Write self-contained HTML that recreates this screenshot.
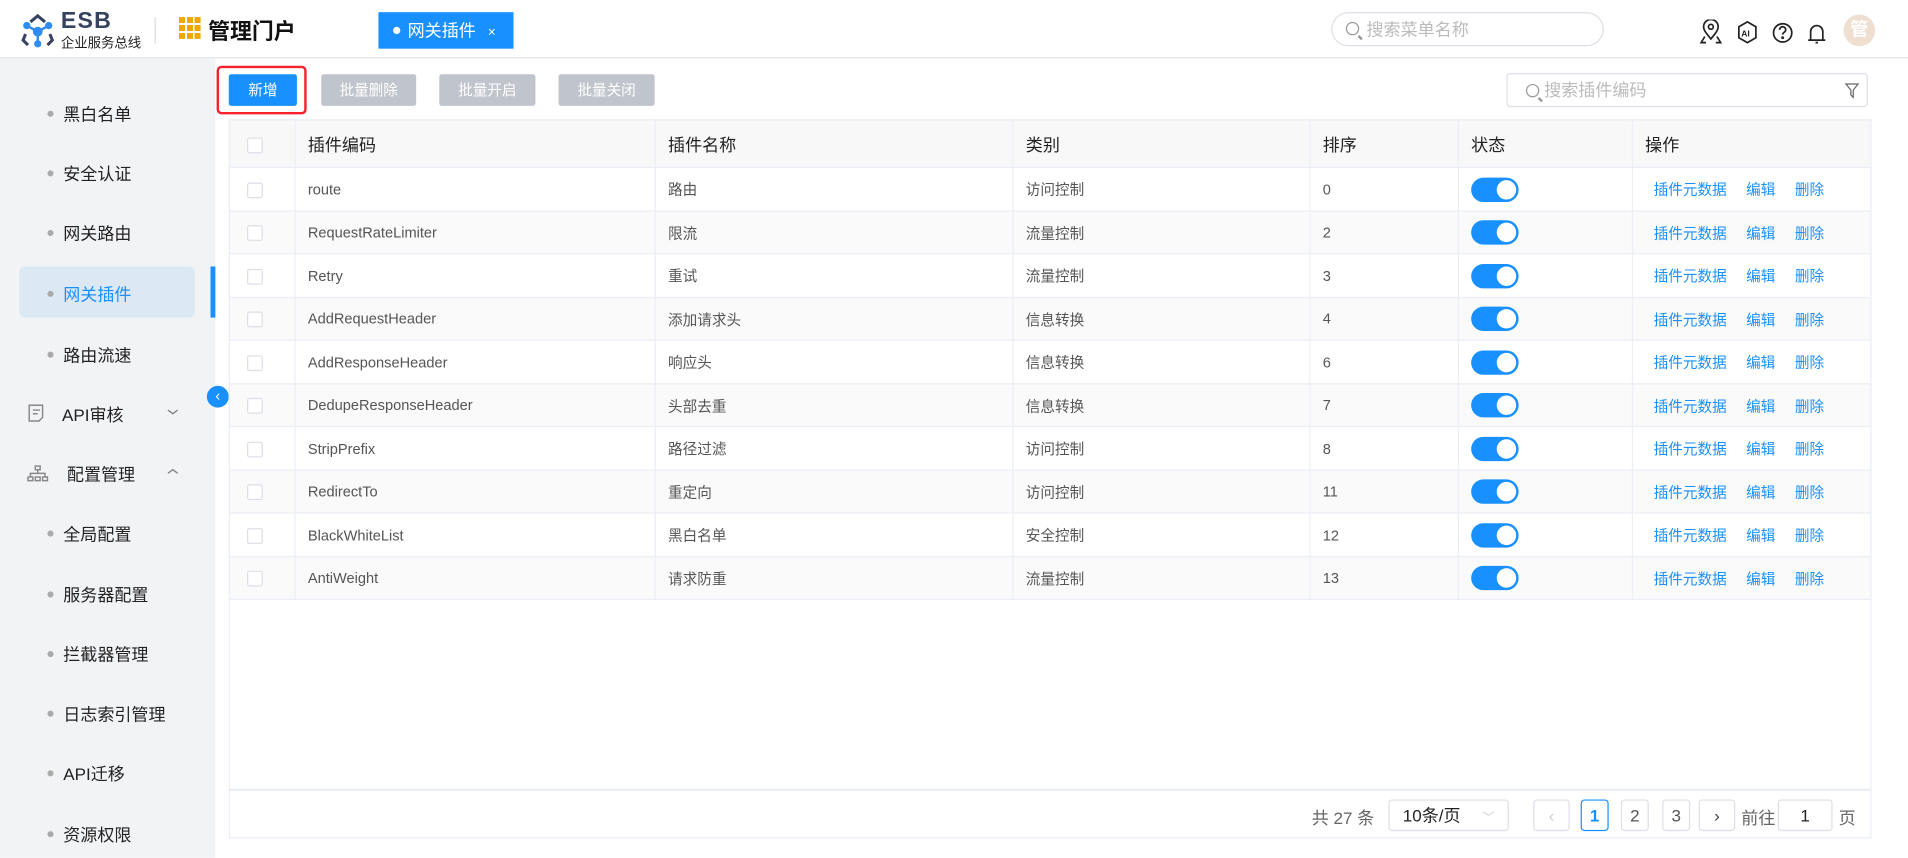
<!DOCTYPE html>
<html><head><meta charset="utf-8"><style>
*{box-sizing:border-box;margin:0;padding:0}
html,body{width:1908px;height:858px;overflow:hidden;background:#fff}
#w{width:1568px;height:705px;transform:scale(1.21684);transform-origin:0 0;position:relative;font-family:"Liberation Sans","Noto Sans CJK SC",sans-serif;color:#333;font-size:13px}
.a{position:absolute}
.hdr{left:0;top:0;width:1568px;height:48px;border-bottom:1px solid #e4e4e4;background:#fff}
.side{left:0;top:48px;width:177px;height:657px;background:#f2f3f5}
.si{position:absolute;left:52px;font-size:14px;color:#222}
.si:before{content:"";position:absolute;left:-13px;top:7px;width:5px;height:5px;border-radius:50%;background:#aaa}
.btn{position:absolute;top:61px;height:26px;color:#fff;font-size:12px;text-align:center;line-height:26px;border-radius:2px}
table{border-collapse:collapse;position:absolute;left:188px;top:98px;width:1350px;table-layout:fixed}
td,th{border:1px solid #ebeef5;height:35.5px;font-size:12px;color:#555;padding-left:10px;text-align:left;font-weight:normal;padding-top:1px}
th{height:39px;font-size:14px;color:#222;background:#f8f8f9}
tr:nth-child(odd) td{background:#fafafa}
.cb{display:inline-block;width:13px;height:13px;border:1px solid #dcdfe6;border-radius:2px;background:#fff;vertical-align:middle;margin-left:4px}
.sw{display:inline-block;width:39px;height:20px;border-radius:10px;background:#1890ff;position:relative;vertical-align:middle}
.sw:after{content:"";position:absolute;right:2px;top:2px;width:16px;height:16px;border-radius:50%;background:#fff}
.op{color:#1890ff;font-size:12px;margin-left:7px;margin-right:9px}
.pg{position:absolute;top:657px;height:26px;border:1px solid #dcdfe6;border-radius:3px;text-align:center;line-height:24px;font-size:14px;color:#555}
.mg{position:absolute;width:11px;height:11px;border:1.5px solid #999;border-radius:50%}
.mg:after{content:"";position:absolute;right:-4px;bottom:-3px;width:4px;height:1.5px;background:#999;transform:rotate(45deg)}
</style></head><body><div id="w">
<div class="a hdr"></div>
<svg class="a" style="left:16px;top:10px" width="30" height="30" viewBox="0 0 30 30"><g fill="none" stroke="#364260" stroke-width="2.5"><path d="M9 8l6-5 6 5"/><path d="M5 18l-2 5 4 4"/><path d="M25 18l2 5-4 4"/></g><g stroke="#2f8cf0" stroke-width="2" fill="#2f8cf0"><line x1="15" y1="16" x2="6" y2="11"/><line x1="15" y1="16" x2="24" y2="11"/><line x1="15" y1="16" x2="15" y2="26"/><circle cx="15" cy="16" r="3"/><circle cx="6" cy="11" r="2"/><circle cx="24" cy="11" r="2"/><circle cx="15" cy="26" r="2"/></g></svg>
<div class="a" style="left:50px;top:8px;font-size:19px;font-weight:bold;color:#364260;letter-spacing:1px;line-height:19px">ESB</div>
<div class="a" style="left:50px;top:27px;font-size:11px;color:#222">企业服务总线</div>
<div class="a" style="left:127px;top:14px;width:1px;height:22px;background:#ddd"></div>
<div class="a" style="left:147px;top:14px;width:18px;height:18px;background:repeating-linear-gradient(90deg,#f0a800 0 5px,transparent 5px 6.5px),#fff;-webkit-mask:repeating-linear-gradient(0deg,#000 0 5px,transparent 5px 6.5px)"></div>
<div class="a" style="left:171px;top:12px;font-size:18px;font-weight:bold;color:#111">管理门户</div>
<div class="a" style="left:311px;top:10px;width:111px;height:30px;background:#1890ff;color:#fff;font-size:14px;line-height:30px;padding-left:24px">网关插件 <span style="font-size:11px;margin-left:6px">×</span><span style="position:absolute;left:12px;top:12px;width:6px;height:6px;border-radius:50%;background:#fff"></span></div>
<div class="a" style="left:1094px;top:10px;width:224px;height:28px;border:1px solid #dcdfe6;border-radius:14px;color:#bbb;font-size:14px;line-height:26px;padding-left:28px">搜索菜单名称<span class="mg" style="left:11px;top:7px"></span></div>
<svg class="a" style="left:1396px;top:16px" width="110" height="22" viewBox="0 0 110 22" fill="none" stroke="#222" stroke-width="1.4"><path d="M10 16c-4-5-6-7-6-10a6 6 0 0112 0c0 3-2 5-6 10z"/><circle cx="10" cy="6" r="2"/><path d="M5 14l-3 5h4M15 14l3 5h-4"/><path d="M40 2l7 4v9l-7 4-7-4V6z"/><text x="35" y="14" font-size="7" fill="#222" stroke="none" font-family="Liberation Sans" font-weight="bold">AI</text><circle cx="69" cy="11" r="7.5"/><path d="M66.5 8.5a2.5 2.5 0 015 0c0 2-2.5 2-2.5 4"/><circle cx="69" cy="15" r=".5" fill="#222"/><path d="M92 17V10a5 5 0 0110 0v7zM90 17h14M96 19h2"/></svg>
<div class="a" style="left:1515px;top:12px;width:26px;height:26px;border-radius:50%;background:#efdfd0;color:#fff;font-size:15px;text-align:center;line-height:26px;font-weight:bold">管</div>
<div class="a side"></div>
<div class="a" style="left:16px;top:219px;width:144px;height:42px;background:#dde8f5;border-radius:4px"></div>
<div class="a" style="left:173px;top:219px;width:4px;height:42px;background:#1890ff"></div>
<div class="si" style="top:84px">黑白名单</div>
<div class="si" style="top:133px">安全认证</div>
<div class="si" style="top:182px">网关路由</div>
<div class="si" style="top:232px;color:#1890ff">网关插件</div>
<div class="si" style="top:282px">路由流速</div>
<div class="a" style="left:51px;top:331px;font-size:14px;color:#222">API审核</div>
<div class="a" style="left:55px;top:380px;font-size:14px;color:#222">配置管理</div>
<svg class="a" style="left:20px;top:330px" width="140" height="70" fill="none" stroke="#888" stroke-width="1.2"><path d="M4 3h11v10l-3 3H4z M7 7h6M7 10h4"/><path d="M118 7l4 3 4-3"/><path d="M118 59l4-3 4 3"/><rect x="9" y="53" width="4" height="3"/><rect x="3" y="62" width="4" height="3"/><rect x="9" y="62" width="4" height="3"/><rect x="15" y="62" width="4" height="3"/><path d="M11 56v3M5 62v-3h12v3"/></svg>
<div class="si" style="top:429px">全局配置</div>
<div class="si" style="top:479px">服务器配置</div>
<div class="si" style="top:528px">拦截器管理</div>
<div class="si" style="top:577px">日志索引管理</div>
<div class="si" style="top:626px">API迁移</div>
<div class="si" style="top:676px">资源权限</div>
<div class="a" style="left:170px;top:317px;width:18px;height:18px;border-radius:50%;background:#1890ff;color:#fff;font-size:12px;text-align:center;line-height:17px">‹</div>
<div class="a" style="left:178px;top:54px;width:74px;height:40px;border:2.5px solid #f5222d;border-radius:4px"></div>
<div class="btn" style="left:188px;width:56px;background:#1890ff">新增</div>
<div class="btn" style="left:264px;width:78px;background:#c0c4cc">批量删除</div>
<div class="btn" style="left:361px;width:79px;background:#c0c4cc">批量开启</div>
<div class="btn" style="left:459px;width:79px;background:#c0c4cc">批量关闭</div>
<div class="a" style="left:1238px;top:60px;width:297px;height:28px;border:1px solid #dcdfe6;border-radius:3px;color:#bbb;font-size:14px;line-height:26px;padding-left:30px">搜索插件编码<span class="mg" style="left:15px;top:8px"></span><svg style="position:absolute;right:6px;top:7px" width="12" height="13" fill="none" stroke="#666"><path d="M1 1h10L7 6v6L5 10V6z"/></svg></div>
<table>
<colgroup><col style="width:54px"><col style="width:296px"><col style="width:294px"><col style="width:244px"><col style="width:122px"><col style="width:143px"><col></colgroup>
<tr><th><span class="cb"></span></th><th>插件编码</th><th>插件名称</th><th>类别</th><th>排序</th><th>状态</th><th>操作</th></tr>
<tr><td><span class="cb"></span></td><td>route</td><td>路由</td><td>访问控制</td><td>0</td><td><span class="sw"></span></td><td><span class="op">插件元数据</span><span class="op">编辑</span><span class="op">删除</span></td></tr>
<tr><td><span class="cb"></span></td><td>RequestRateLimiter</td><td>限流</td><td>流量控制</td><td>2</td><td><span class="sw"></span></td><td><span class="op">插件元数据</span><span class="op">编辑</span><span class="op">删除</span></td></tr>
<tr><td><span class="cb"></span></td><td>Retry</td><td>重试</td><td>流量控制</td><td>3</td><td><span class="sw"></span></td><td><span class="op">插件元数据</span><span class="op">编辑</span><span class="op">删除</span></td></tr>
<tr><td><span class="cb"></span></td><td>AddRequestHeader</td><td>添加请求头</td><td>信息转换</td><td>4</td><td><span class="sw"></span></td><td><span class="op">插件元数据</span><span class="op">编辑</span><span class="op">删除</span></td></tr>
<tr><td><span class="cb"></span></td><td>AddResponseHeader</td><td>响应头</td><td>信息转换</td><td>6</td><td><span class="sw"></span></td><td><span class="op">插件元数据</span><span class="op">编辑</span><span class="op">删除</span></td></tr>
<tr><td><span class="cb"></span></td><td>DedupeResponseHeader</td><td>头部去重</td><td>信息转换</td><td>7</td><td><span class="sw"></span></td><td><span class="op">插件元数据</span><span class="op">编辑</span><span class="op">删除</span></td></tr>
<tr><td><span class="cb"></span></td><td>StripPrefix</td><td>路径过滤</td><td>访问控制</td><td>8</td><td><span class="sw"></span></td><td><span class="op">插件元数据</span><span class="op">编辑</span><span class="op">删除</span></td></tr>
<tr><td><span class="cb"></span></td><td>RedirectTo</td><td>重定向</td><td>访问控制</td><td>11</td><td><span class="sw"></span></td><td><span class="op">插件元数据</span><span class="op">编辑</span><span class="op">删除</span></td></tr>
<tr><td><span class="cb"></span></td><td>BlackWhiteList</td><td>黑白名单</td><td>安全控制</td><td>12</td><td><span class="sw"></span></td><td><span class="op">插件元数据</span><span class="op">编辑</span><span class="op">删除</span></td></tr>
<tr><td><span class="cb"></span></td><td>AntiWeight</td><td>请求防重</td><td>流量控制</td><td>13</td><td><span class="sw"></span></td><td><span class="op">插件元数据</span><span class="op">编辑</span><span class="op">删除</span></td></tr>
</table>
<div class="a" style="left:188px;top:98px;width:1350px;height:591px;border:1px solid #ebeef5;pointer-events:none"></div>
<div class="a" style="left:188px;top:648px;width:1350px;height:2px;background:#ebeef5"></div>
<div class="a" style="left:1078px;top:662px;font-size:14px;color:#666">共 27 条</div>
<div class="pg" style="left:1141px;width:99px;color:#222">10条/页 <span style="color:#ccc;font-size:10px;margin-left:14px">﹀</span></div>
<div class="pg" style="left:1260px;width:30px;color:#ccc">‹</div>
<div class="pg" style="left:1299px;width:23px;border-color:#1890ff;color:#1890ff;font-weight:bold">1</div>
<div class="pg" style="left:1332px;width:23px">2</div>
<div class="pg" style="left:1366px;width:23px">3</div>
<div class="pg" style="left:1396px;width:30px;color:#444">›</div>
<div class="a" style="left:1431px;top:662px;font-size:14px;color:#666">前往</div>
<div class="pg" style="left:1461px;width:45px;color:#222">1</div>
<div class="a" style="left:1511px;top:662px;font-size:14px;color:#666">页</div>
</div></body></html>
